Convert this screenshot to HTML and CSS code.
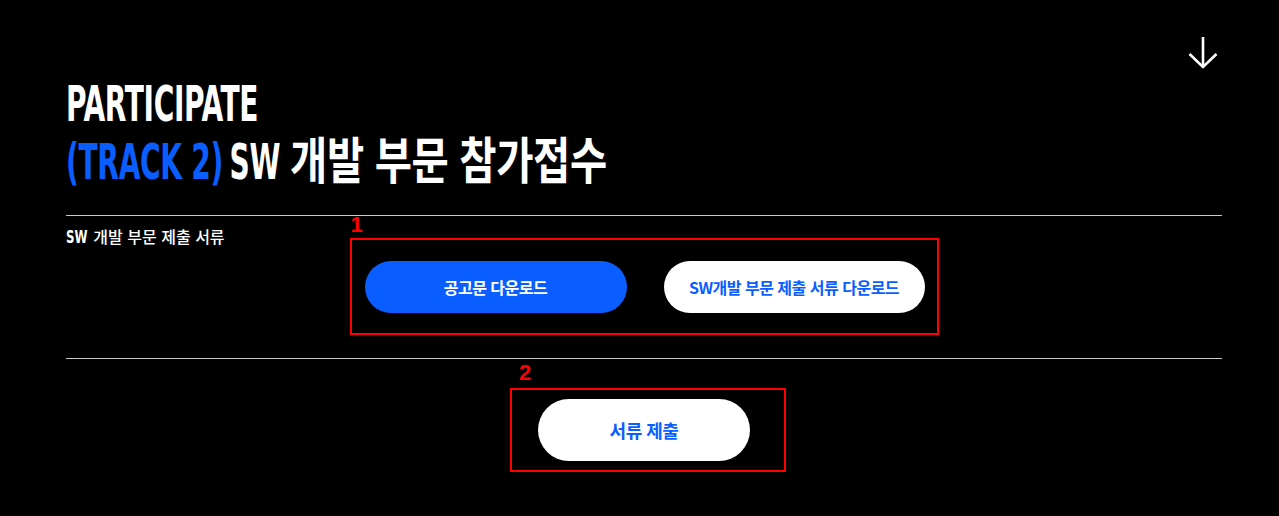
FILE: index.html
```html
<!DOCTYPE html>
<html lang="ko">
<head>
  <meta charset="UTF-8" />
  <meta name="viewport" content="width=device-width, initial-scale=1.0"/>
  <title>Participate - Track 2</title>
  <link rel="stylesheet" href="styles.css">
</head>
<body>
  <div class="page">
    <div class="top">
      <a class="scroll-down" href="#submit" aria-label="아래로">
        <svg width="30" height="33" viewBox="0 0 30 33" fill="none" stroke="#fff" stroke-width="2.6">
          <line x1="15" y1="1" x2="15" y2="31" />
          <polyline points="1.5,18 15,31 28.5,18" />
        </svg>
      </a>
    </div>

    <h1 class="title">
      <span class="line"><span class="cond cond-participate">PARTICIPATE</span></span>
      <span class="line"><span class="cond cond-track blue">(TRACK 2)</span> <span class="cond cond-sw">SW</span> 개발 부문 참가접수</span>
    </h1>

    <hr class="divider first">

    <div class="row docs">
      <div class="label"><span class="cond">SW</span> 개발 부문 제출 서류</div>
      <div class="mark-col">
        <div class="mark">1</div>
        <div class="box box-docs">
          <a class="btn btn-blue" href="#">공고문 다운로드</a>
          <a class="btn btn-white" href="#">SW개발 부문 제출 서류 다운로드</a>
        </div>
      </div>
    </div>

    <hr class="divider">

    <div class="row submit" id="submit">
      <div></div>
      <div class="mark-col shifted">
        <div class="mark mark-two">2</div>
        <div class="box box-submit">
          <a class="btn btn-white btn-big" href="#">서류 제출</a>
        </div>
      </div>
    </div>
  </div>
</body>
</html>
```

FILE: styles.css
```css
body {
  margin: 0;
  background-color: #000;
  color: #fff;
  font-family: "Noto Sans CJK KR", "Noto Sans", sans-serif;
}
a {
  text-decoration: none;
}
.page {
  margin: 0 57px 0 66px;
}
.top {
  display: flex;
  justify-content: flex-end;
  padding-top: 36px;
}
.scroll-down {
  display: block;
  width: 30px;
  height: 33px;
  margin-right: 4px;
}
.scroll-down svg {
  display: block;
}

/* title: condensed latin + narrowed korean */
.title {
  margin: 1px 0 0;
  font-family: "Noto Sans CJK KR", sans-serif;
  font-weight: 700;
  font-size: 50px;
  line-height: 58px;
  letter-spacing: -0.5px;
}
.title .line {
  display: block;
  height: 58px;
  white-space: nowrap;
  transform: scaleX(0.81);
  transform-origin: left center;
}
.cond {
  display: inline-block;
  font-family: "DejaVu Sans Condensed", "Liberation Sans", sans-serif;
  font-weight: 700;
  transform: scaleX(0.77);
  transform-origin: left center;
}
.cond-participate {
  margin-right: -70px;
}
.cond-track {
  margin-right: -63px;
}
.cond-sw {
  margin-right: -20px;
}
.blue {
  color: #0a5eff;
}
.divider {
  border: 0;
  border-top: 1px solid #c8c8c8;
  margin: 0;
  height: 0;
}
.divider.first {
  margin-top: 29px;
}
.row {
  display: grid;
  grid-template-columns: 1fr auto 1fr;
}
.docs {
  padding-bottom: 23px;
}
.label {
  padding-top: 9px;
  font-weight: 500;
  font-size: 16px;
  line-height: 22px;
  white-space: nowrap;
}
.label .cond {
  font-size: 17px;
  margin-right: -5px;
}
.mark {
  font-family: "Liberation Sans", Arial, sans-serif;
  font-weight: 700;
  font-size: 22px;
  line-height: 18px;
  color: #f00;
  padding-left: 1px;
  margin-bottom: 4px;
}
.mark-two {
  margin-top: 5px;
  margin-bottom: 6px;
  padding-left: 9px;
}
.box {
  border: 2px solid #f00;
  display: flex;
  align-items: center;
}
.box-docs {
  padding: 21px 12px 20px 13px;
  gap: 37px;
}
.box-submit {
  padding: 9px 34px 9px 26px;
}
.shifted {
  margin-left: 8px;
}
.btn {
  display: flex;
  align-items: center;
  justify-content: center;
  width: 262px;
  height: 52px;
  border-radius: 26px;
  font-weight: 700;
  font-size: 16px;
  letter-spacing: -0.5px;
}
.btn-blue {
  background-color: #0a5eff;
  color: #fff;
}
.btn-white {
  background-color: #fff;
  color: #0a5eff;
  width: 261px;
}
.btn-big {
  width: 212px;
  height: 62px;
  border-radius: 31px;
  font-size: 18px;
}
```
